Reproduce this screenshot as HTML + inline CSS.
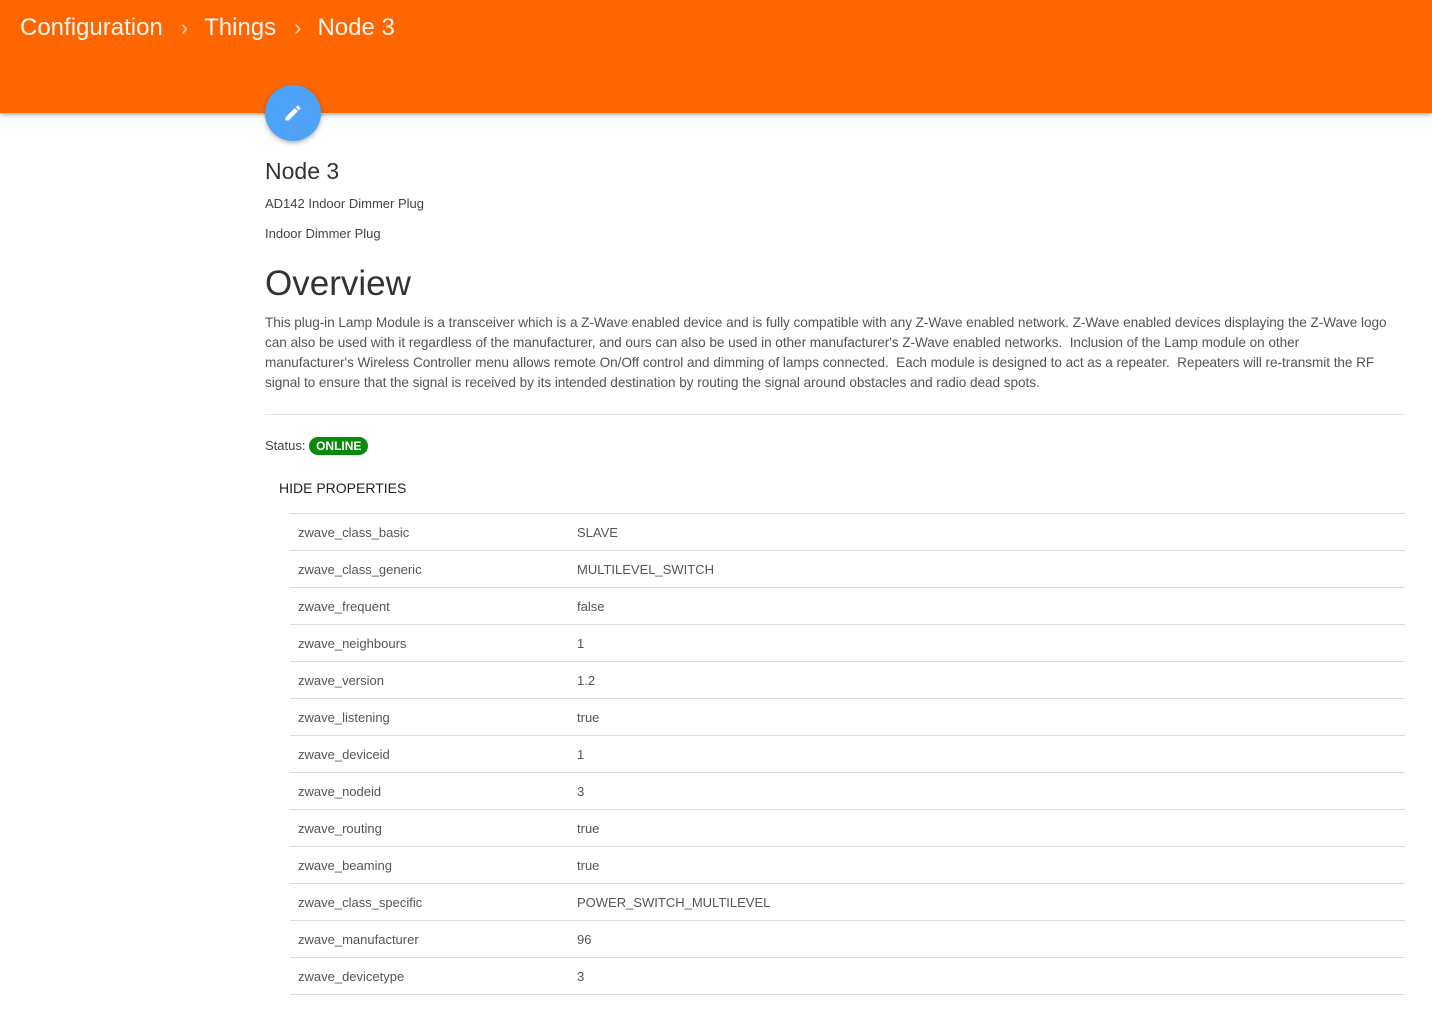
<!DOCTYPE html>
<html><head><style>
*{margin:0;padding:0;box-sizing:border-box}
body{width:1432px;height:1020px;background:#fff;font-family:"Liberation Sans",sans-serif;color:#333;position:relative;overflow:hidden}
.hdr{position:absolute;left:0;top:0;width:1432px;height:113px;background:#ff6600;box-shadow:0 2px 4px rgba(0,0,0,.3)}
.bc{position:absolute;left:20px;top:14px;color:#fff;font-size:24px;white-space:nowrap;opacity:.95}
.bc span.s{font-size:22px;margin:0 16px 0 18px;opacity:.75}
.fab{position:absolute;left:265px;top:85px;width:56px;height:56px;border-radius:50%;background:#4ea2f7;box-shadow:0 2px 5px rgba(0,0,0,.3)}
.fab svg{position:absolute;left:18px;top:18px}
.t{position:absolute;left:265px;white-space:nowrap}
.p{font-size:13.6px;line-height:20px;color:#555;top:313px;letter-spacing:-0.05px}
table{position:absolute;left:290px;top:513px;width:1115px;border-collapse:collapse;font-size:13px;color:#555}
td{height:37px;border-top:1px solid #ddd;border-bottom:1px solid #ddd;padding-left:8px;vertical-align:middle}
td.v{padding-left:0;width:828px}
</style></head><body>
<div class="hdr"><div class="bc">Configuration<span class="s">›</span>Things<span class="s">›</span>Node 3</div></div>
<div class="fab"><svg width="20" height="20" viewBox="0 0 24 24"><path fill="#fff" d="M3 17.25V21h3.75L17.81 9.94l-3.75-3.75L3 17.25zM20.71 7.04a1 1 0 000-1.41l-2.34-2.340a1 1 0 00-1.41 0l-1.83 1.83 3.75 3.75 1.830-1.83z"/></svg></div>
<div class="t" style="top:158px;font-size:23px;color:#333">Node 3</div>
<div class="t" style="top:196px;font-size:13px;color:#444">AD142 Indoor Dimmer Plug</div>
<div class="t" style="top:226px;font-size:13px;color:#444">Indoor Dimmer Plug</div>
<div class="t" style="top:264px;font-size:35px;color:#333">Overview</div>
<div class="t p">This plug-in Lamp Module is a transceiver which is a Z-Wave enabled device and is fully compatible with any Z-Wave enabled network. Z-Wave enabled devices displaying the Z-Wave logo<br>can also be used with it regardless of the manufacturer, and ours can also be used in other manufacturer's Z-Wave enabled networks.&nbsp; Inclusion of the Lamp module on other<br>manufacturer's Wireless Controller menu allows remote On/Off control and dimming of lamps connected.&nbsp; Each module is designed to act as a repeater.&nbsp; Repeaters will re-transmit the RF<br>signal to ensure that the signal is received by its intended destination by routing the signal around obstacles and radio dead spots.</div>
<div style="position:absolute;left:265px;top:414px;width:1140px;border-top:1px solid #e5e5e5"></div>
<div class="t" style="top:437px;font-size:13px;color:#444">Status: <span style="display:inline-block;background:#0a8a0a;color:#fff;font-weight:bold;font-size:12px;border-radius:9px;padding:2px 7px;line-height:14px">ONLINE</span></div>
<div class="t" style="left:279px;top:480px;font-size:14px;color:#222">HIDE PROPERTIES</div>
<table>
<tr><td>zwave_class_basic</td><td class="v">SLAVE</td></tr>
<tr><td>zwave_class_generic</td><td class="v">MULTILEVEL_SWITCH</td></tr>
<tr><td>zwave_frequent</td><td class="v">false</td></tr>
<tr><td>zwave_neighbours</td><td class="v">1</td></tr>
<tr><td>zwave_version</td><td class="v">1.2</td></tr>
<tr><td>zwave_listening</td><td class="v">true</td></tr>
<tr><td>zwave_deviceid</td><td class="v">1</td></tr>
<tr><td>zwave_nodeid</td><td class="v">3</td></tr>
<tr><td>zwave_routing</td><td class="v">true</td></tr>
<tr><td>zwave_beaming</td><td class="v">true</td></tr>
<tr><td>zwave_class_specific</td><td class="v">POWER_SWITCH_MULTILEVEL</td></tr>
<tr><td>zwave_manufacturer</td><td class="v">96</td></tr>
<tr><td>zwave_devicetype</td><td class="v">3</td></tr>
</table>
</body></html>
